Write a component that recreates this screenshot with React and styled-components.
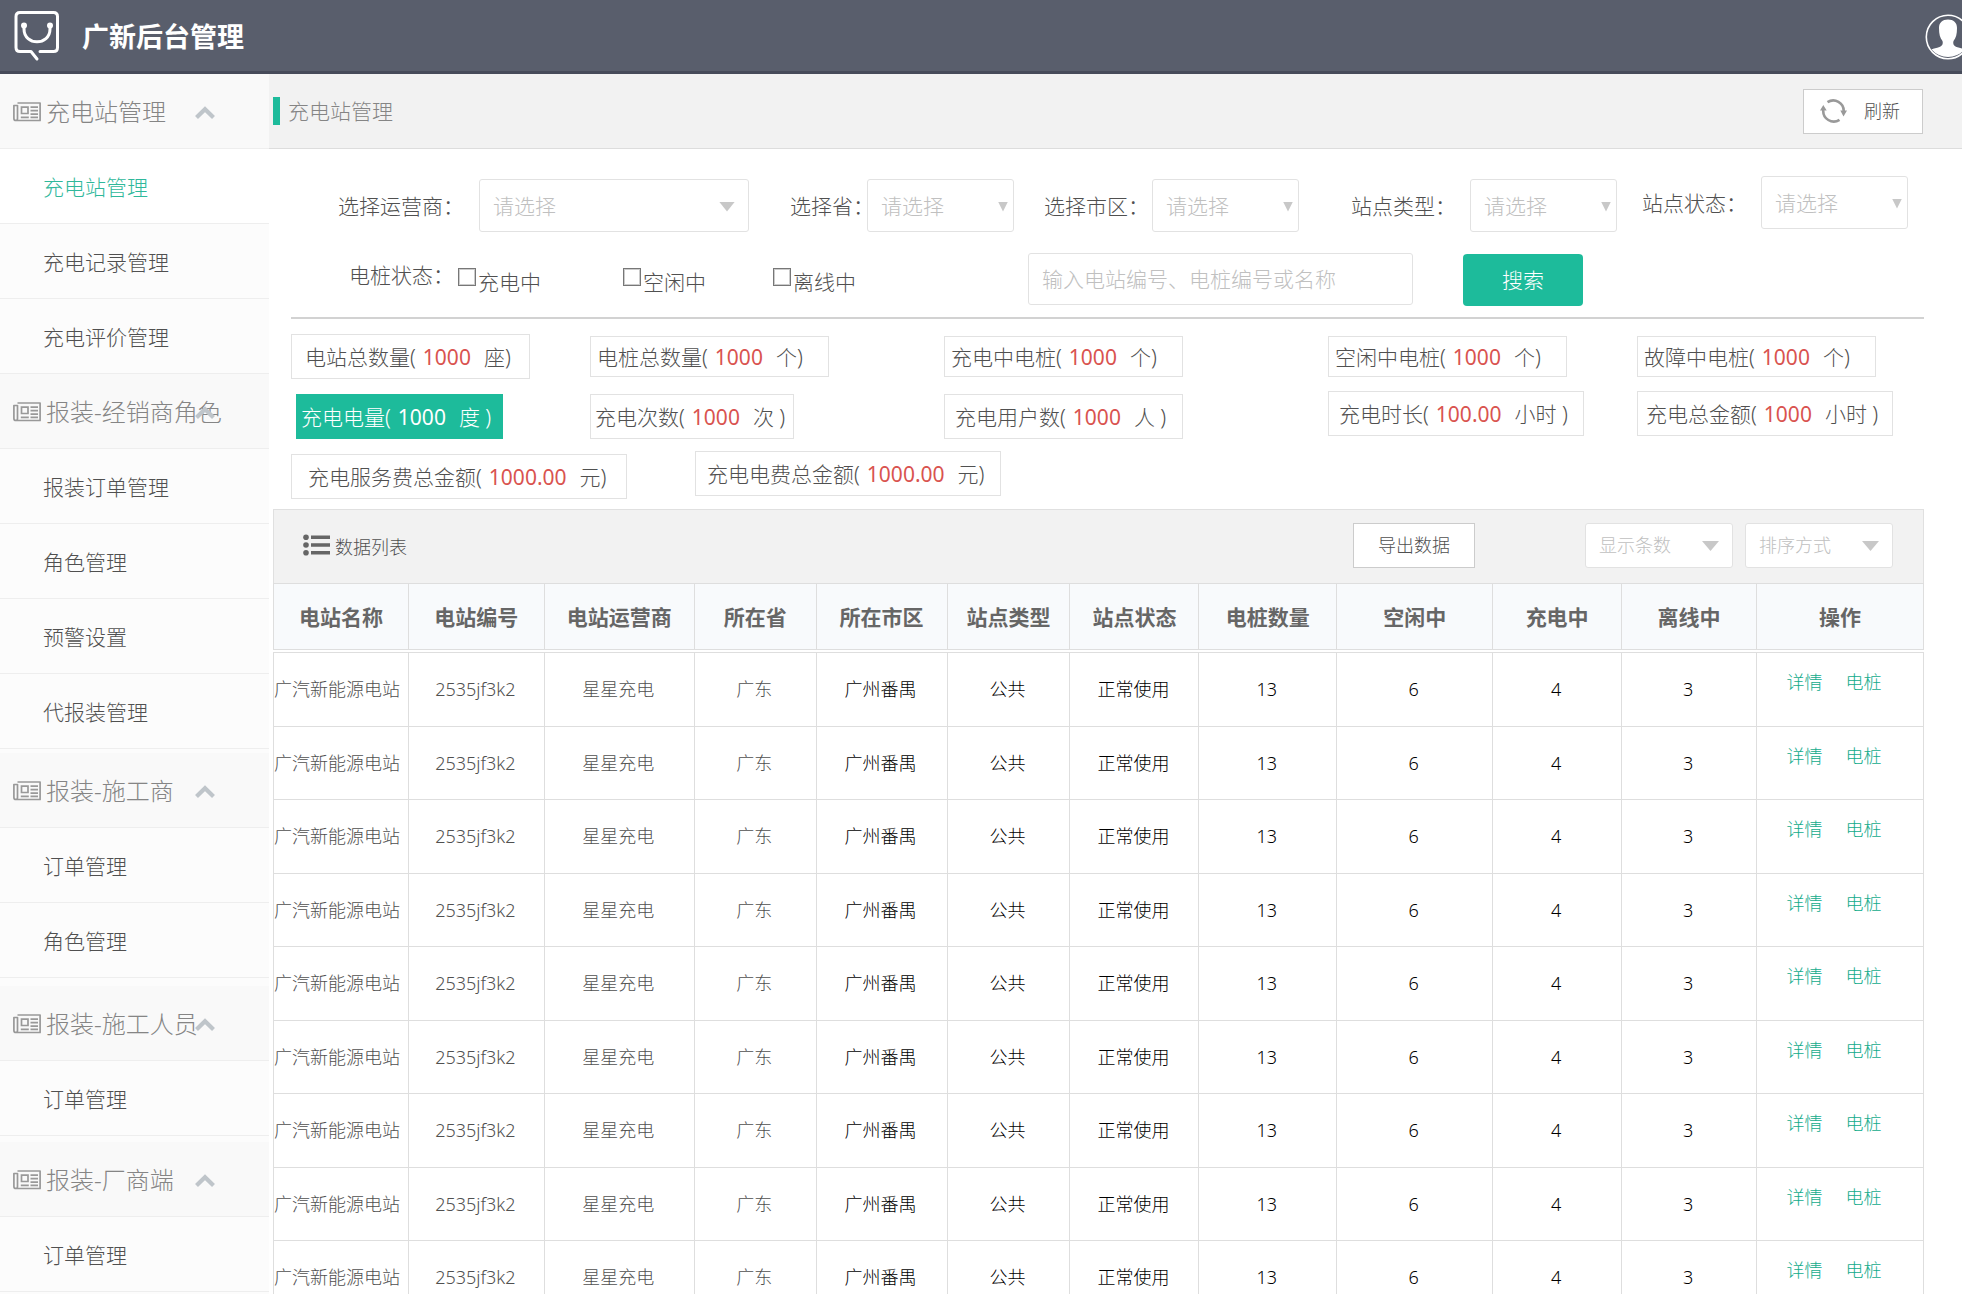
import React from 'react';
import styled, { createGlobalStyle } from 'styled-components';

const menu = [
    { title: '充电站管理', gap: 0, items: ['充电站管理', '充电记录管理', '充电评价管理'] },
    { title: '报装-经销商角色', gap: 0, items: ['报装订单管理', '角色管理', '预警设置', '代报装管理'] },
    { title: '报装-施工商', gap: 4, items: ['订单管理', '角色管理'] },
    { title: '报装-施工人员', gap: 8, items: ['订单管理'] },
    { title: '报装-厂商端', gap: 6, items: ['订单管理'] },
];

const stats = [
    { label: '电站总数量', value: '1000', unit: '座)', width: 239, pad: 13, tall: true },
    { label: '电桩总数量', value: '1000', unit: '个)', width: 239, pad: 6 },
    { label: '充电中电桩', value: '1000', unit: '个)', width: 239, pad: 6 },
    { label: '空闲中电桩', value: '1000', unit: '个)', width: 239, pad: 6 },
    { label: '故障中电桩', value: '1000', unit: '个)', width: 239, pad: 6 },
    { label: '充电电量', value: '1000', unit: '度 )', width: 207, pad: 4, tall: true, active: true },
    { label: '充电次数', value: '1000', unit: '次 )', width: 204, pad: 4, tall: true },
    { label: '充电用户数', value: '1000', unit: '人 )', width: 239, pad: 10, tall: true },
    { label: '充电时长', value: '100.00', unit: '小时 )', width: 256, pad: 10, tall: true, raised: true },
    { label: '充电总金额', value: '1000', unit: '小时 )', width: 256, pad: 8, tall: true, raised: true },
];

const totals = [
    { label: '充电服务费总金额', value: '1000.00', unit: '元)', width: 336, pad: 16, tall: true },
    { label: '充电电费总金额', value: '1000.00', unit: '元)', width: 306, pad: 11, tall: true, raised: true },
];

const columns = [
    ['电站名称', 135],
    ['电站编号', 136],
    ['电站运营商', 150],
    ['所在省', 122],
    ['所在市区', 131],
    ['站点类型', 123],
    ['站点状态', 129],
    ['电桩数量', 138],
    ['空闲中', 156],
    ['充电中', 129],
    ['离线中', 135],
    ['操作', 167],
];

const row = ['广汽新能源电站', '2535jf3k2', '星星充电', '广东', '广州番禺', '公共', '正常使用', '13', '6', '4', '3'];
const rows = Array.from({ length: 9 }, () => row);

function Logo() {
    return (
        <svg width="46" height="52" viewBox="0 0 46 52" fill="none" stroke="#fff" strokeWidth="3" strokeLinecap="round">
            <path d="M26 41.5H39.5q4 0 4-4V6.500q0-4-4-4H6q-4 0-4 4V37.500q0 4 4 4H17L23 49" strokeLinejoin="round" />
            <path d="M10 15V19C10 36 36 36 36 19V15" />
            <circle cx="10" cy="15.500" r="1.500" />
            <circle cx="36" cy="15.500" r="1.500" />
        </svg>
    )
}

function AvatarIcon() {
    return (
        <svg width="46" height="46" viewBox="0 0 46 46">
            <circle cx="23" cy="23" r="21.700" fill="none" stroke="#fff" strokeWidth="1.600" />
            <path fill="#fff" d="M23 5.500c5.500 0 9 3 9 8.500 0 6-1 10-3.500 13-.8 3 .2 5 3 6 3 1 6 1.500 8 2.500A22 22 0 0 1 6.500 35.500c2-1 5-1.500 8-2.500 2.800-1 3.800-3 3-6C15 24 14 20 14 14c0-5.500 3.500-8.500 9-8.500z" />
        </svg>
    )
}

function NewsIcon() {
    return (
        <svg width="28" height="20" viewBox="0 0 28 20" fill="none" stroke="#999" strokeWidth="1.700">
            <path d="M4.500 1H27.100V18.500H3Q.9 18.500.9 16.500V3.500H4.500V16.500Q4.500 18.500 3 18.500" strokeLinejoin="round" />
            <path d="M8.500 5.200H15V11.500H8.500ZM17.500 5.200H25M17.500 8.700H25M17.500 12.200H25M7.800 15.300H15.800M17.500 15.300H25" />
        </svg>
    )
}

function ChevronIcon() {
    return (
        <svg width="20" height="14" viewBox="0 0 20 14" fill="none" stroke="#bfc5ca" strokeWidth="4.200">
            <path d="M1.500 11.500L10 3.200L18.500 11.500" />
        </svg>
    )
}

function RefreshIcon() {
    return (
        <svg width="27" height="26" viewBox="0 0 27 26" fill="none" stroke="#999" strokeWidth="2.600">
            <path d="M7.500 4.200A10.500 10.500 0 0 1 23.700 13.500" />
            <path d="M19.500 21.800A10.500 10.500 0 0 1 3.300 12" />
            <path d="M20.300 12.500H27L23.500 18.500ZM0 12.500H6.700L3.300 7Z" fill="#999" stroke="none" />
        </svg>
    )
}

function ListIcon() {
    return (
        <svg width="27" height="22" viewBox="0 0 27 22" fill="#666">
            <circle cx="3" cy="3.300" r="2.800" />
            <circle cx="3" cy="11" r="2.800" />
            <circle cx="3" cy="18.700" r="2.800" />
            <path d="M8 1.500H27V5H8ZM8 9.200H27V12.800H8ZM8 17H27V20.500H8Z" />
        </svg>
    )
}

function Dropdown({ id, label, width = 147, caret = 10, small }) {
    return (
        <SelectBox $width={width} $caret={caret} $small={small}>
            <select id={id} aria-label={id ? undefined : label} defaultValue="">
                <option value="">{id ? '请选择' : label}</option>
            </select>
        </SelectBox>
    )
}

function Stat({ stat }) {
    return (
        <StatBox $width={stat.width} $pad={stat.pad} $tall={stat.tall} $active={stat.active} $raised={stat.raised}>
            {stat.label}(<strong>{stat.value}</strong>{stat.unit}
        </StatBox>
    )
}

function Sidebar() {
    return (
        <Side>
            {menu.map((group, g) => (
                <Group key={group.title} $gap={group.gap}>
                    <GroupTitle type="button">
                        <NewsIcon />
                        {group.title}
                        <Arrow><ChevronIcon /></Arrow>
                    </GroupTitle>
                    {group.items.map((item, i) => (
                        <MenuLink href="#" key={item} className={g === 0 && i === 0 ? 'active' : ''}>{item}</MenuLink>
                    ))}
                </Group>
            ))}
        </Side>
    )
}

function App() {
    return (
        <Shell>
            <GlobalStyle />
            <Header>
                <Logo />
                <h1>广新后台管理</h1>
                <AvatarButton type="button" aria-label="账户"><AvatarIcon /></AvatarButton>
            </Header>
            <Body>
                <Sidebar />
                <Main>
                    <TitleBar>
                        <h2>充电站管理</h2>
                        <RefreshButton type="button"><RefreshIcon />刷新</RefreshButton>
                    </TitleBar>
                    <Filters>
                        <FilterRow>
                            <Field $label={141} $indent={47}>
                                <label htmlFor="operator">选择运营商：</label>
                                <Dropdown id="operator" width={270} caret={16} />
                            </Field>
                            <Field $label={77} $indent={41}>
                                <label htmlFor="province">选择省：</label>
                                <Dropdown id="province" />
                            </Field>
                            <Field $label={108} $indent={30}>
                                <label htmlFor="city">选择市区：</label>
                                <Dropdown id="city" />
                            </Field>
                            <Field $label={119} $indent={52}>
                                <label htmlFor="type">站点类型：</label>
                                <Dropdown id="type" />
                            </Field>
                            <Field $label={119} $indent={25} $raised>
                                <label htmlFor="status">站点状态：</label>
                                <Dropdown id="status" />
                            </Field>
                        </FilterRow>
                        <SearchRow>
                            <Checks>
                                <legend>电桩状态：</legend>
                                <Check $width={165}><input type="checkbox" />充电中</Check>
                                <Check $width={150}><input type="checkbox" />空闲中</Check>
                                <Check $width={255}><input type="checkbox" />离线中</Check>
                            </Checks>
                            <SearchInput type="text" aria-label="搜索电站" placeholder="输入电站编号、电桩编号或名称" />
                            <SearchButton type="submit">搜索</SearchButton>
                        </SearchRow>
                    </Filters>
                    <Stats>
                        {stats.map(stat => <Stat key={stat.label} stat={stat} />)}
                    </Stats>
                    <Totals>
                        {totals.map(stat => <Stat key={stat.label} stat={stat} />)}
                    </Totals>
                    <Panel>
                        <Toolbar>
                            <ListIcon />
                            <h3>数据列表</h3>
                            <ExportButton type="button">导出数据</ExportButton>
                            <Dropdown label="显示条数" width={148} caret={17} small />
                            <Dropdown label="排序方式" width={148} caret={17} small />
                        </Toolbar>
                        <Table>
                            <colgroup>
                                {columns.map(([name, width]) => <col key={name} style={{ width: `${width / 16.51}%` }} />)}
                            </colgroup>
                            <thead>
                                <tr>{columns.map(([name]) => <th key={name}>{name}</th>)}</tr>
                            </thead>
                            <tbody>
                                <Spacer aria-hidden="true"><td colSpan={12}></td></Spacer>
                                {rows.map((cells, r) => (
                                    <tr key={r}>
                                        {cells.map((cell, c) => <td key={c}>{cell}</td>)}
                                        <Actions><a href="#">详情</a><a href="#">电桩</a></Actions>
                                    </tr>
                                ))}
                            </tbody>
                        </Table>
                    </Panel>
                </Main>
            </Body>
        </Shell>
    )
}

const GlobalStyle = createGlobalStyle`
    *{
        box-sizing: border-box;
    }
    body{
        margin: 0;
        background: #fff;
    }
    body, button, input, select{
        font-family: "Noto Sans", "Noto Sans CJK SC", sans-serif;
        font-size: 21px;
        font-weight: 300;
        line-height: 28px;
        color: #505050;
    }
    h1, h2, h3{
        margin: 0;
    }
    a{
        text-decoration: none;
    }
    button{
        cursor: pointer;
    }
`;

const Shell = styled.div`
    display: flex;
    flex-direction: column;
    height: 100vh;
    overflow: hidden;
`;

const Header = styled.header`
    display: flex;
    flex: none;
    align-items: center;
    height: 74px;
    padding: 0 0 0 14px;
    overflow: hidden;
    background: #595e6c;
    border-bottom: 3px solid #474b5a;
    h1{
        margin-left: 22px;
        padding-top: 2px;
        color: #fff;
        font-size: 27px;
        font-weight: 700;
    }
`;

const AvatarButton = styled.button`
    display: flex;
    flex: none;
    margin: 0 -9px 0 auto;
    padding: 2px 0 0;
    border: 0;
    background: none;
`;

const Body = styled.div`
    display: flex;
    flex: 1;
    min-height: 0;
`;

const Side = styled.nav`
    flex: none;
    width: 269px;
    overflow: hidden;
    background: #fcfcfc;
`;

const Group = styled.div`
    padding-top: ${props => props.$gap}px;
`;

const GroupTitle = styled.button`
    position: relative;
    display: flex;
    align-items: center;
    gap: 5px;
    width: 100%;
    height: 75px;
    padding: 2px 0 0 13px;
    border: 0;
    border-bottom: 1px solid #eee;
    background: #f9f9f9;
    color: #858585;
    font-size: 24px;
    white-space: nowrap;
`;

const Arrow = styled.span`
    position: absolute;
    top: 32px;
    left: 195px;
    display: flex;
`;

const MenuLink = styled.a`
    display: flex;
    align-items: center;
    height: 75px;
    padding: 2px 0 0 43px;
    border-bottom: 1px solid #eee;
    color: #505050;
    &.active{
        background: #fff;
        color: #2fb89b;
    }
`;

const Main = styled.main`
    flex: 1;
    min-width: 0;
    overflow: hidden;
`;

const TitleBar = styled.div`
    display: flex;
    align-items: center;
    justify-content: space-between;
    height: 75px;
    padding: 0 39px 0 4px;
    background: #f2f2f2;
    border-bottom: 1px solid #ddd;
    h2{
        padding-left: 8px;
        border-left: 7px solid #1dbb9b;
        color: #858585;
        font-size: 21px;
        font-weight: 300;
    }
`;

const RefreshButton = styled.button`
    display: flex;
    align-items: center;
    gap: 17px;
    width: 120px;
    height: 45px;
    padding: 0 0 0 16px;
    border: 1px solid #ccc;
    background: #fff;
    font-size: 18px;
`;

const Filters = styled.form`
    margin: 27px 38px 0 22px;
    padding-bottom: 11px;
    border-bottom: 2px solid #d2d2d2;
`;

const FilterRow = styled.div`
    display: flex;
    align-items: flex-end;
`;

const Field = styled.div`
    display: flex;
    align-items: center;
    margin-left: ${props => props.$indent}px;
    margin-bottom: ${props => props.$raised ? 3 : 0}px;
    label{
        width: ${props => props.$label}px;
        white-space: nowrap;
    }
`;

const SelectBox = styled.span`
    position: relative;
    display: block;
    width: ${props => props.$width}px;
    select{
        display: block;
        width: 100%;
        height: ${props => props.$small ? 45 : 53}px;
        padding: 0 13px;
        appearance: none;
        border: 1px solid #e2e2e2;
        border-radius: 3px;
        background: #fff;
        color: #c0c0c0;
        font-size: ${props => props.$small ? 18 : 21}px;
    }
    &::after{
        content: '';
        position: absolute;
        top: calc(50% - 4px);
        right: ${props => props.$caret > 10 ? 14 : 6}px;
        width: ${props => props.$caret}px;
        height: 10px;
        background: #c8c8c8;
        clip-path: polygon(0 0, 100% 0, 50% 100%);
        pointer-events: none;
    }
`;

const SearchRow = styled.div`
    display: flex;
    margin-top: 21px;
`;

const Checks = styled.fieldset`
    display: flex;
    margin: 0;
    padding: 15px 0 0 58px;
    border: 0;
    legend{
        float: left;
        width: 109px;
        height: 28px;
        margin-top: -7px;
        padding: 0;
        white-space: nowrap;
    }
`;

const Check = styled.label`
    display: flex;
    align-items: flex-start;
    gap: 2px;
    width: ${props => props.$width}px;
    input{
        width: 18px;
        height: 18px;
        margin: 0;
        appearance: none;
        border: 1px solid #777;
        background: #fff;
        box-shadow: inset 0 0 0 1px #ccc;
    }
    input:checked{
        background: #1dbb9b;
    }
`;

const SearchInput = styled.input`
    width: 385px;
    height: 52px;
    padding: 0 13px;
    border: 1px solid #e2e2e2;
    border-radius: 3px;
    &::placeholder{
        color: #c0c0c0;
        opacity: 1;
    }
`;

const SearchButton = styled.button`
    width: 120px;
    height: 52px;
    margin: 1px 0 0 50px;
    border: 0;
    border-radius: 4px;
    background: #1dbb9b;
    color: #fff;
`;

const Stats = styled.div`
    display: grid;
    grid-template-columns: 299fr 354fr 384fr 309fr 287fr;
    grid-template-rows: 45px 45px;
    align-items: center;
    row-gap: 15px;
    margin: 15px 38px 0 22px;
`;

const StatBox = styled.div`
    display: flex;
    align-items: center;
    width: ${props => props.$width}px;
    height: ${props => props.$tall ? 45 : 41}px;
    margin-left: ${props => props.$active ? 5 : 0}px;
    margin-bottom: ${props => props.$raised ? 6 : 0}px;
    padding-left: ${props => props.$pad}px;
    border: 1px solid ${props => props.$active ? '#1dbb9b' : '#e2e2e2'};
    background: ${props => props.$active ? '#1dbb9b' : '#fff'};
    color: ${props => props.$active ? '#fff' : '#505050'};
    white-space: nowrap;
    strong{
        margin: 0 13px 0 7px;
        color: ${props => props.$active ? '#fff' : '#d9534f'};
        font-weight: 400;
    }
`;

const Totals = styled.div`
    display: flex;
    align-items: center;
    gap: 68px;
    height: 45px;
    margin: 15px 38px 0 22px;
`;

const Panel = styled.section`
    margin: 10px 38px 0 4px;
`;

const Toolbar = styled.div`
    display: flex;
    align-items: center;
    gap: 12px;
    height: 74px;
    padding: 0 30px 3px 29px;
    border: 1px solid #e0e0e0;
    border-bottom: 0;
    background: #f2f2f2;
    h3{
        margin: 4px auto 0 -7px;
        font-size: 18px;
        font-weight: 300;
    }
`;

const ExportButton = styled.button`
    width: 122px;
    height: 45px;
    margin-right: 98px;
    padding: 0;
    border: 1px solid #ccc;
    background: #fff;
    font-size: 18px;
`;

const Table = styled.table`
    width: 100%;
    table-layout: fixed;
    border-collapse: collapse;
    th, td{
        padding: 0;
        border: 1px solid #dedede;
        text-align: center;
        white-space: nowrap;
    }
    th{
        height: 66px;
        background: #f8fafc;
        color: #666;
        font-size: 21px;
        font-weight: 700;
    }
    td{
        height: 73px;
        padding: 0 2px 1px 0;
        color: #000;
        font-size: 18px;
    }
    tr:nth-child(even) td{
        height: 74px;
    }
    td:nth-child(-n+4){
        color: #505050;
    }
    td:first-child{
        text-align: left;
    }
`;

const Spacer = styled.tr`
    && td{
        height: 3px;
        padding: 0;
        border-left: 0;
        border-right: 0;
        line-height: 1px;
    }
`;

const Actions = styled.td`
    && {
        padding: 0 12px 15px 0;
    }
    a{
        color: #12ab8b;
    }
    a + a{
        margin-left: 23px;
    }
`;

export default App;
